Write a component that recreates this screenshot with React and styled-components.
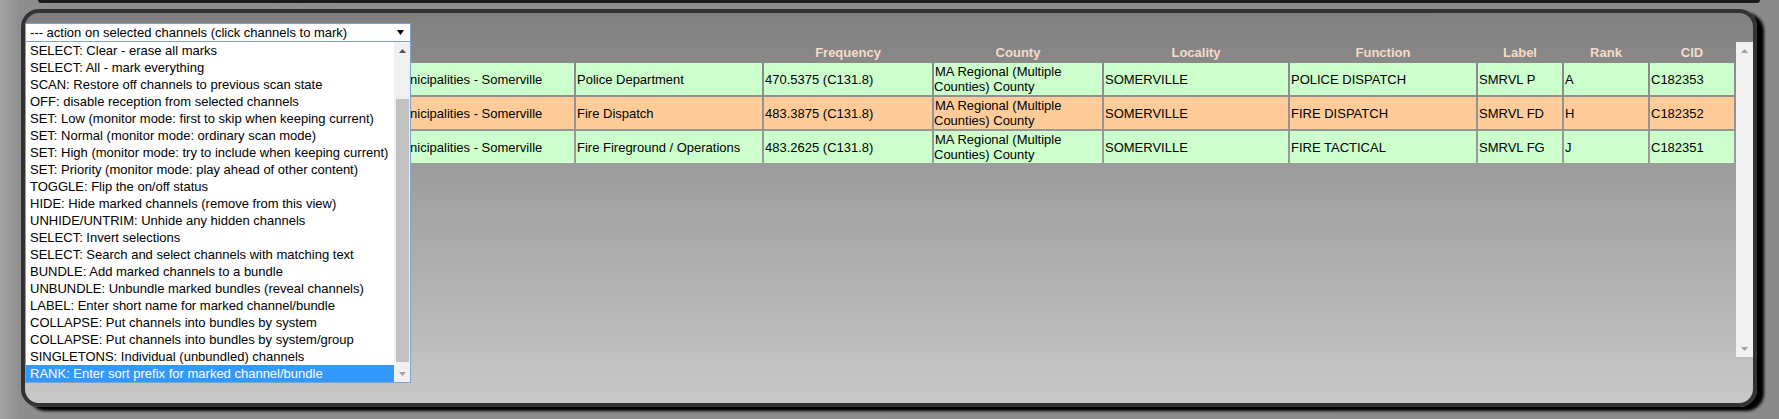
import React from "react";
import styled, { createGlobalStyle } from "styled-components";

const GlobalStyle = createGlobalStyle`
  html, body { margin: 0; padding: 0; }
  body {
    background: linear-gradient(to right, #a4a4a4 0px, #8e8e8e 20px, #8a8a8a 100%);
    font-family: "Liberation Sans", Arial, sans-serif;
    font-size: 13px;
    color: #000;
    overflow: hidden;
  }
`;

const Page = styled.div`
  width: 1779px;
  height: 419px;
  overflow: hidden;
  display: flex;
  flex-direction: column;
`;

const PrevPanelEdge = styled.div`
  height: 3px;
  margin-left: 38px;
  width: 1722px;
  background: #1b1b1b;
  border-radius: 0 0 6px 6px;
`;

const Panel = styled.div`
  box-sizing: border-box;
  margin: 6px 0 0 21px;
  width: 1736px;
  height: 398px;
  border: 4px solid #333;
  border-radius: 18px;
  background: linear-gradient(to bottom, #808080, #c8c8c8);
  box-shadow: 7px 4px 3px #000;
  padding-top: 10px;
  display: flex;
  flex-direction: column;
`;

const ActionMenu = styled.div`
  position: relative;
  z-index: 3;
  width: 386px;
  height: 19px;
  flex: none;
`;

const SelectBox = styled.div`
  box-sizing: border-box;
  height: 19px;
  border: 1px solid #7da2ce;
  background: #fff;
  display: flex;
  align-items: center;
  justify-content: space-between;
  padding: 0 6px 0 4px;
  line-height: 17px;
  white-space: nowrap;
`;

const ListBox = styled.div`
  position: absolute;
  top: 100%;
  left: 0;
  width: 386px;
  height: 341px;
  box-sizing: border-box;
  border: 1px solid #7da2ce;
  border-top: none;
  background: #fff;
  display: flex;
`;

const Options = styled.div`
  flex: 1;
  display: flex;
  flex-direction: column;
  min-width: 0;
`;

const Option = styled.div`
  height: 17px;
  line-height: 17px;
  padding-left: 4px;
  white-space: nowrap;
  overflow: hidden;
  background: ${(p) => (p.$selected ? "#3399ff" : "transparent")};
  color: ${(p) => (p.$selected ? "#fff" : "#000")};
`;

const ListScroll = styled.div`
  width: 16px;
  flex: none;
  background: #f0f0f0;
  display: flex;
  flex-direction: column;
`;

const ScrollButton = styled.div`
  height: 17px;
  flex: none;
  display: flex;
  align-items: center;
  justify-content: center;
`;

const ScrollGap = styled.div`
  height: ${(p) => p.$size}px;
  flex: none;
`;

const ScrollThumb = styled.div`
  height: ${(p) => p.$size}px;
  flex: none;
  margin: 0 1px 0 2px;
  background: #c1c1c1;
`;

const TableArea = styled.div`
  display: flex;
  height: 315px;
  flex: none;
`;

const TableWrap = styled.div`
  width: 1711px;
  flex: none;
  overflow: hidden;
`;

const DataTable = styled.table`
  border-collapse: separate;
  border-spacing: 2px;
  table-layout: fixed;
  width: 1711px;
  font-size: 13px;
`;

const HeadCell = styled.th`
  height: 17px;
  padding: 0;
  font-weight: bold;
  font-size: 13px;
  color: #f5dbc8;
  text-align: center;
  vertical-align: middle;
  white-space: nowrap;
`;

const Cell = styled.td`
  height: 32px;
  padding: 0;
  text-indent: 1px;
  line-height: 15px;
  vertical-align: middle;
  background: ${(p) => (p.$tone === "fire" ? "#ffcc99" : "#ccffcc")};
  overflow: hidden;
`;

const VScroll = styled.div`
  width: 17px;
  flex: none;
  background: #f1f1f1;
  display: flex;
  flex-direction: column;
  justify-content: space-between;
`;

const Arrow = ({ dir, color, w = 7, h = 4 }) => (
  <svg width={w} height={h} viewBox={`0 0 ${w} ${h}`}>
    {dir === "up" ? (
      <polygon points={`0,${h} ${w},${h} ${w / 2},0`} fill={color} />
    ) : (
      <polygon points={`0,0 ${w},0 ${w / 2},${h}`} fill={color} />
    )}
  </svg>
);

const actions = [
  "SELECT: Clear - erase all marks",
  "SELECT: All - mark everything",
  "SCAN: Restore off channels to previous scan state",
  "OFF: disable reception from selected channels",
  "SET: Low (monitor mode: first to skip when keeping current)",
  "SET: Normal (monitor mode: ordinary scan mode)",
  "SET: High (monitor mode: try to include when keeping current)",
  "SET: Priority (monitor mode: play ahead of other content)",
  "TOGGLE: Flip the on/off status",
  "HIDE: Hide marked channels (remove from this view)",
  "UNHIDE/UNTRIM: Unhide any hidden channels",
  "SELECT: Invert selections",
  "SELECT: Search and select channels with matching text",
  "BUNDLE: Add marked channels to a bundle",
  "UNBUNDLE: Unbundle marked bundles (reveal channels)",
  "LABEL: Enter short name for marked channel/bundle",
  "COLLAPSE: Put channels into bundles by system",
  "COLLAPSE: Put channels into bundles by system/group",
  "SINGLETONS: Individual (unbundled) channels",
  "RANK: Enter sort prefix for marked channel/bundle",
];

const columns = [
  { w: 362, title: "" },
  { w: 183, title: "" },
  { w: 186, title: "" },
  { w: 168, title: "Frequency" },
  { w: 168, title: "County" },
  { w: 184, title: "Locality" },
  { w: 186, title: "Function" },
  { w: 84, title: "Label" },
  { w: 84, title: "Rank" },
  { w: 84, title: "CID" },
];

const rows = [
  {
    tone: "police",
    cells: [
      "",
      "Municipalities - Somerville",
      "Police Department",
      "470.5375 (C131.8)",
      "MA Regional (Multiple Counties) County",
      "SOMERVILLE",
      "POLICE DISPATCH",
      "SMRVL P",
      "A",
      "C182353",
    ],
  },
  {
    tone: "fire",
    cells: [
      "",
      "Municipalities - Somerville",
      "Fire Dispatch",
      "483.3875 (C131.8)",
      "MA Regional (Multiple Counties) County",
      "SOMERVILLE",
      "FIRE DISPATCH",
      "SMRVL FD",
      "H",
      "C182352",
    ],
  },
  {
    tone: "police",
    cells: [
      "",
      "Municipalities - Somerville",
      "Fire Fireground / Operations",
      "483.2625 (C131.8)",
      "MA Regional (Multiple Counties) County",
      "SOMERVILLE",
      "FIRE TACTICAL",
      "SMRVL FG",
      "J",
      "C182351",
    ],
  },
];

export default function App() {
  return (
    <>
      <GlobalStyle />
      <Page>
        <PrevPanelEdge />
        <Panel>
          <ActionMenu>
            <SelectBox>
              <span>--- action on selected channels (click channels to mark)</span>
              <Arrow dir="down" color="#000" w={7} h={5} />
            </SelectBox>
            <ListBox>
              <Options>
                {actions.map((a, i) => (
                  <Option key={i} $selected={i === actions.length - 1}>
                    {a}
                  </Option>
                ))}
              </Options>
              <ListScroll>
                <ScrollButton>
                  <Arrow dir="up" color="#505050" />
                </ScrollButton>
                <ScrollGap $size={40} />
                <ScrollThumb $size={263} />
                <ScrollGap $size={3} />
                <ScrollButton>
                  <Arrow dir="down" color="#a3a3a3" />
                </ScrollButton>
              </ListScroll>
            </ListBox>
          </ActionMenu>
          <TableArea>
            <TableWrap>
              <DataTable>
                <colgroup>
                  {columns.map((c, i) => (
                    <col key={i} style={{ width: c.w }} />
                  ))}
                </colgroup>
                <thead>
                  <tr>
                    {columns.map((c, i) => (
                      <HeadCell key={i}>{c.title}</HeadCell>
                    ))}
                  </tr>
                </thead>
                <tbody>
                  {rows.map((r, ri) => (
                    <tr key={ri}>
                      {r.cells.map((c, ci) => (
                        <Cell key={ci} $tone={r.tone}>
                          {c}
                        </Cell>
                      ))}
                    </tr>
                  ))}
                </tbody>
              </DataTable>
            </TableWrap>
            <VScroll>
              <ScrollButton>
                <Arrow dir="up" color="#a3a3a3" />
              </ScrollButton>
              <ScrollButton>
                <Arrow dir="down" color="#a3a3a3" />
              </ScrollButton>
            </VScroll>
          </TableArea>
        </Panel>
      </Page>
    </>
  );
}
